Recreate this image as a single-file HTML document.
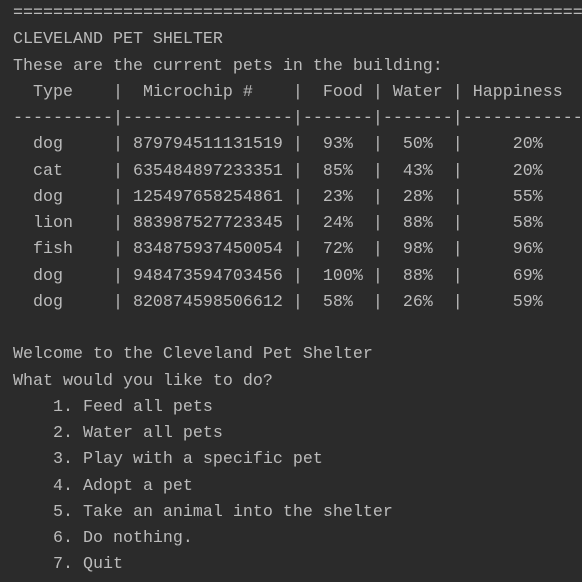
<!DOCTYPE html>
<html><head><meta charset="utf-8"><style>
html,body{margin:0;padding:0;background:#2b2b2b;width:582px;height:582px;overflow:hidden}
pre{margin:0;position:absolute;left:13px;top:1px;font-family:"Liberation Mono",monospace;font-size:16.67px;line-height:26.25px;color:#bbbbbb;white-space:pre}
</style></head><body><pre>==========================================================
CLEVELAND PET SHELTER
These are the current pets in the building:
  Type    |  Microchip #    |  Food | Water | Happiness
----------|-----------------|-------|-------|------------
  dog     | 879794511131519 |  93%  |  50%  |     20%
  cat     | 635484897233351 |  85%  |  43%  |     20%
  dog     | 125497658254861 |  23%  |  28%  |     55%
  lion    | 883987527723345 |  24%  |  88%  |     58%
  fish    | 834875937450054 |  72%  |  98%  |     96%
  dog     | 948473594703456 |  100% |  88%  |     69%
  dog     | 820874598506612 |  58%  |  26%  |     59%

Welcome to the Cleveland Pet Shelter
What would you like to do?
    1. Feed all pets
    2. Water all pets
    3. Play with a specific pet
    4. Adopt a pet
    5. Take an animal into the shelter
    6. Do nothing.
    7. Quit</pre></body></html>
